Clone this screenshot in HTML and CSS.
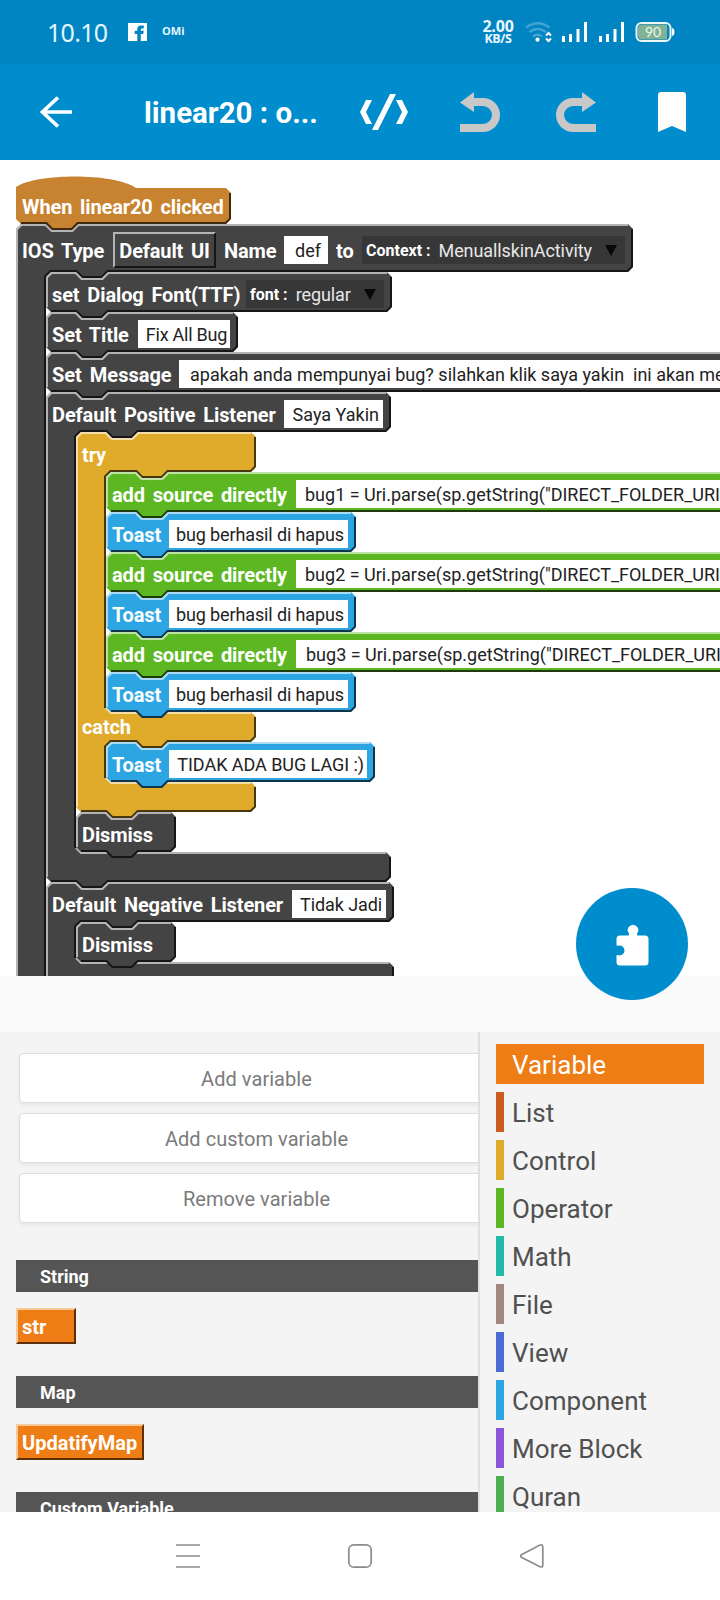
FILE: index.html
```html
<!DOCTYPE html>
<html lang="en">
<head>
<meta charset="utf-8">
<meta name="viewport" content="width=720">
<title>linear20 : onClick</title>
<link rel="stylesheet" href="styles.css">
</head>
<body>
<div class="phone">
  <header class="status">
    <span class="clock">10.10</span>
    <svg class="fb" width="19" height="18" viewBox="0 0 19 18"><path fill="#fff" d="M0 0H19V18H0z"/><path fill="#0084c2" d="M9.300 18V11H6.700V7.800H9.300V6.200Q9.300 2.500 13 2.500H15.800V5.500H14Q12.800 5.500 12.800 6.700V7.800H15.700L15.300 11H12.800V18z"/></svg>
    <span class="omi">OMi</span>
    <span class="speed"><b>2.00</b><i>KB/S</i></span>
    <svg class="net" width="156" height="24" viewBox="520 20 156 24" fill="none">
      <g stroke="#3fa5d6" stroke-width="2.600"><path d="M526 27.500q12-8.500 23.500 0M529.500 32q8-6 16.500 0M533 36.500q4.500-3.500 9 0"/></g>
      <circle cx="537.500" cy="39.700" r="2.100" fill="#fff"/>
      <path d="M546 35.500l2.500-2.500 2.500 2.500M546 38.500l2.500 2.500 2.500-2.500" stroke="#fff" stroke-width="2"/>
      <path fill="#fff" d="M562 36h3v6h-3zM569 34h3v8h-3zM576.500 29h3v13h-3zM584 22h3v20h-3zM599 36h3v6h-3zM606 34h3v8h-3zM613.500 29h3v13h-3zM621 22h3v20h-3z"/>
      <rect x="636.500" y="23" width="34" height="18" rx="5" stroke="#eaf6fa" stroke-width="2"/>
      <path d="M642 24.500H667V39.500H642q-4 0-4-4v-7q0-4 4-4z" fill="#83b196"/>
      <path d="M672.500 28.500q1.500 0 1.500 3.500t-1.500 3.500z" fill="#fff" stroke="#fff"/>
      <text x="645" y="37.200" class="batt">90</text>
    </svg>
  </header>
  <nav class="toolbar">
    <svg width="720" height="96" viewBox="0 64 720 96" class="tools">
      <path d="M58 97.500L42.500 112L58 126.500M42.500 112H72" fill="none" stroke="#fff" stroke-width="3.700"/>
      <path d="M366 100h6l-6 12 6 12h-6l-6-12zM396 100h6l6 12-6 12h-6l6-12zM390 94h6l-18 36h-6z" fill="#fff"/>
      <path d="M460 102.500L474 92V98H483a17 17 0 0 1 0 34H460V124H483a9 9 0 0 0 0-18H474V112z" fill="#c8c8c8"/>
      <path d="M596 102.500L582 92V98H573a17 17 0 0 0 0 34H596V124H573a9 9 0 0 1 0-18H582V112z" fill="#c8c8c8"/>
      <path d="M658 132V95q0-3 3-3h22q3 0 3 3v37l-14-6z" fill="#fff"/>
    </svg>
    <h1 class="title">linear20 : o...</h1>
  </nav>

  <main class="canvas">
    <svg class="shapes" width="720" height="816" viewBox="0 160 720 816" fill="none">
      <defs>
        <g id="toast">
          <path fill="#2ca5e2" d="M0 5L5 0H30l6 6h20l6-6H245l5 5V35l-5 5H62l-6 6H36l-6-6H5l-5-5z"/>
          <path class="lit" d="M1 35V5.500L5.500 1H29.600l6 6h20.800l6-6H245"/>
          <path class="shade" d="M249 5V34.600L244.600 39H61.600l-6 6H36.400l-6-6H5"/>
        </g>
        <g id="source">
          <path fill="#5cb722" d="M0 5L5 0H30l6 6h20l6-6H700V40H62l-6 6H36l-6-6H5l-5-5z"/>
          <path class="lit" d="M1 35V5.500L5.500 1H29.600l6 6h20.800l6-6H700"/>
          <path class="shade" d="M700 39H61.600l-6 6H36.400l-6-6H5"/>
        </g>
        <g id="dismiss">
          <path fill="#444" d="M0 5L5 0H30l6 6h20l6-6H95l5 5V35l-5 5H62l-6 6H36l-6-6H5l-5-5z"/>
          <path class="lit" d="M1 35V5.500L5.500 1H29.600l6 6h20.800l6-6H95"/>
          <path class="shade" d="M99 5V34.600L94.600 39H61.600l-6 6H36.400l-6-6H5"/>
        </g>
      </defs>
      <!-- outer statement wrapping every listener -->
      <g transform="translate(16 224)">
        <path fill="#444" d="M0 5L5 0H30l6 6h20l6-6H612l5 5V43l-5 5H92l-6 6H66l-6-6H35l-5 5V760H0z"/>
        <path class="lit" d="M1 760V5.500L5.500 1H29.600l6 6h20.800l6-6H612"/>
        <path class="shade" d="M616 5V42.600L611.600 47H91.600l-6 6H66.400l-6-6H34.500L29 52.500V760"/>
      </g>
      <!-- event hat -->
      <g transform="translate(16 188)">
        <path fill="#c88330" d="M0-1C22-15 98-15 120 0H210l5 5V31l-5 5H62l-6 6H36l-6-6H5l-5-5z"/>
        <path class="shade" d="M214 5V30.600L209.600 35H61.600l-6 6H36.400l-6-6H5"/>
      </g>
      <!-- dialog font -->
      <g transform="translate(46 272)">
        <path fill="#444" d="M0 5L5 0H30l6 6h20l6-6H341l5 5V35l-5 5H62l-6 6H36l-6-6H5l-5-5z"/>
        <path class="lit" d="M1 35V5.500L5.500 1H29.600l6 6h20.800l6-6H341"/>
        <path class="shade" d="M345 5V34.600L340.600 39H61.600l-6 6H36.400l-6-6H5"/>
      </g>
      <!-- title -->
      <g transform="translate(46 312)">
        <path fill="#444" d="M0 5L5 0H30l6 6h20l6-6H187l5 5V35l-5 5H62l-6 6H36l-6-6H5l-5-5z"/>
        <path class="lit" d="M1 35V5.500L5.500 1H29.600l6 6h20.800l6-6H187"/>
        <path class="shade" d="M191 5V34.600L186.600 39H61.600l-6 6H36.400l-6-6H5"/>
      </g>
      <!-- message -->
      <g transform="translate(46 352)">
        <path fill="#444" d="M0 5L5 0H30l6 6h20l6-6H700V40H62l-6 6H36l-6-6H5l-5-5z"/>
        <path class="lit" d="M1 35V5.500L5.500 1H29.600l6 6h20.800l6-6H700"/>
        <path class="shade" d="M700 39H61.600l-6 6H36.400l-6-6H5"/>
      </g>
      <!-- positive listener -->
      <g transform="translate(46 392)">
        <path fill="#444" d="M0 5L5 0H30l6 6h20l6-6H340l5 5V35l-5 5H92l-6 6H66l-6-6H35l-5 5V455l5 5H340l5 5V485l-5 5H62l-6 6H36l-6-6H5l-5-5z"/>
        <path class="lit" d="M1 485V5.500L5.500 1H29.600l6 6h20.800l6-6H340M30 456l5 5H340"/>
        <path class="shade" d="M344 5V34.600L339.600 39H91.600l-6 6H66.400l-6-6H34.500L29 44.500V456M344 465V484.600L339.600 489H61.600l-6 6H36.400l-6-6H5"/>
      </g>
      <!-- try / catch -->
      <g transform="translate(76 432)">
        <path fill="#e0aa2a" d="M0 5L5 0H30l6 6h20l6-6H175l5 5V35l-5 5H92l-6 6H66l-6-6H35l-5 5V275l5 5H175l5 5V305l-5 5H92l-6 6H66l-6-6H35l-5 5V345l5 5H175l5 5V375l-5 5H62l-6 6H36l-6-6H5l-5-5z"/>
        <path class="lit" d="M1 375V5.500L5.500 1H29.600l6 6h20.800l6-6H175M30 276l5 5H175M30 346l5 5H175"/>
        <path class="shade" d="M179 5V34.600L174.600 39H91.600l-6 6H66.400l-6-6H34.500L29 44.500V276M179 285V304.600L174.600 309H91.600l-6 6H66.400l-6-6H34.500L29 314.500V346M179 355V374.600L174.600 379H61.600l-6 6H36.400l-6-6H5"/>
      </g>
      <!-- negative listener -->
      <g transform="translate(46 882)">
        <path fill="#444" d="M0 5L5 0H30l6 6h20l6-6H343l5 5V35l-5 5H92l-6 6H66l-6-6H35l-5 5V75l5 5H343l5 5V120H0z"/>
        <path class="lit" d="M1 120V5.500L5.500 1H29.600l6 6h20.800l6-6H343M30 76l5 5H343"/>
        <path class="shade" d="M347 5V34.600L342.600 39H91.600l-6 6H66.400l-6-6H34.500L29 44.500V76M347 85V120"/>
      </g>
      <use href="#source" x="106" y="472"/><use href="#toast" x="106" y="512"/>
      <use href="#source" x="106" y="552"/><use href="#toast" x="106" y="592"/>
      <use href="#source" x="106" y="632"/><use href="#toast" x="106" y="672"/>
      <g transform="translate(106 742)">
        <path fill="#2ca5e2" d="M0 5L5 0H30l6 6h20l6-6H264l5 5V35l-5 5H62l-6 6H36l-6-6H5l-5-5z"/>
        <path class="lit" d="M1 35V5.500L5.500 1H29.600l6 6h20.800l6-6H264"/>
        <path class="shade" d="M268 5V34.600L263.600 39H61.600l-6 6H36.400l-6-6H5"/>
      </g>
      <use href="#dismiss" x="76" y="812"/><use href="#dismiss" x="76" y="922"/>
    </svg>

    <div class="stack">
      <div class="row hat"><span class="label">When linear20 clicked</span></div>
      <div class="row tall">
        <span class="label l-type">IOS Type</span><span class="choice">Default UI</span><span class="label l-name">Name</span><span class="field f-def">def</span><span class="label l-to">to</span><span class="drop d-context"><b>Context :</b><span>MenuallskinActivity</span><i class="arrow"></i></span>
      </div>
      <div class="nest">
        <div class="row"><span class="label l-font">set Dialog Font(TTF)</span><span class="drop d-font"><b>font :</b><span>regular</span><i class="arrow"></i></span></div>
        <div class="row"><span class="label l-title">Set Title</span><span class="field f-title">Fix All Bug</span></div>
        <div class="row"><span class="label l-message">Set Message</span><span class="field long f-message">apakah anda mempunyai bug? silahkan klik saya yakin&nbsp; ini akan menghapus</span></div>
        <div class="row"><span class="label l-positive">Default Positive Listener</span><span class="field f-yes">Saya Yakin</span></div>
        <div class="nest">
          <div class="row"><span class="label">try</span></div>
          <div class="nest">
            <div class="row"><span class="label l-source">add source directly</span><span class="field long">bug1 = Uri.parse(sp.getString("DIRECT_FOLDER_URI",</span></div>
            <div class="row"><span class="label l-toast">Toast</span><span class="field f-bug">bug berhasil di hapus</span></div>
            <div class="row"><span class="label l-source">add source directly</span><span class="field long">bug2 = Uri.parse(sp.getString("DIRECT_FOLDER_URI",</span></div>
            <div class="row"><span class="label l-toast">Toast</span><span class="field f-bug">bug berhasil di hapus</span></div>
            <div class="row"><span class="label l-source">add source directly</span><span class="field long third">bug3 = Uri.parse(sp.getString("DIRECT_FOLDER_URI",</span></div>
            <div class="row"><span class="label l-toast">Toast</span><span class="field f-bug">bug berhasil di hapus</span></div>
          </div>
          <div class="row catch"><span class="label">catch</span></div>
          <div class="nest">
            <div class="row"><span class="label l-toast">Toast</span><span class="field f-none">TIDAK ADA BUG LAGI :)</span></div>
          </div>
          <div class="foot"></div>
          <div class="row"><span class="label">Dismiss</span></div>
        </div>
        <div class="foot"></div>
        <div class="row"><span class="label l-negative">Default Negative Listener</span><span class="field f-no">Tidak Jadi</span></div>
        <div class="nest">
          <div class="row"><span class="label">Dismiss</span></div>
        </div>
      </div>
    </div>
  </main>

  <div class="gap">
    <button class="fab" aria-label="Blocks">
      <svg width="40" height="44" viewBox="0 0 40 44"><path fill="#fff" d="M7 12.500H14.500q1-.5 .3-2.200a5.200 5.200 0 1 1 8.400 0q-.7 1.700 .3 2.200H31q3.500 0 3.500 3.500V39q0 3.500-3.500 3.500H6q-3.500 0-3.500-3.500V32.500Q3 31.500 5.500 32.500a5 5 0 1 0 0-10Q3 23 2.500 22V16q0-3.500 3.500-3.500z"/></svg>
    </button>
  </div>

  <section class="palette">
    <div class="blocks">
      <div class="pill">Add variable</div>
      <div class="pill">Add custom variable</div>
      <div class="pill">Remove variable</div>
      <h2 class="group first">String</h2>
      <span class="var str">str</span>
      <h2 class="group">Map</h2>
      <span class="var map">UpdatifyMap</span>
      <h2 class="group">Custom Variable</h2>
    </div>
    <ul class="cats">
      <li class="cat on">Variable</li>
      <li class="cat list">List</li>
      <li class="cat control">Control</li>
      <li class="cat operator">Operator</li>
      <li class="cat math">Math</li>
      <li class="cat file">File</li>
      <li class="cat view">View</li>
      <li class="cat component">Component</li>
      <li class="cat more">More Block</li>
      <li class="cat quran">Quran</li>
    </ul>
  </section>

  <footer class="keys">
    <svg width="720" height="88" viewBox="0 1512 720 88" fill="none" stroke="#8c8c8c" stroke-width="1.700">
      <path d="M176 1545H200M176 1556H200M176 1567H200"/>
      <rect x="348.800" y="1544.800" width="22.400" height="22.400" rx="5"/>
      <path d="M521.800 1554.500L539.500 1545.300Q542.800 1544 542.800 1547V1565Q542.800 1568 539.500 1566.500L521.800 1557.500Q519.500 1556 521.800 1554.500z"/>
    </svg>
  </footer>
</div>
</body>
</html>
```
FILE: styles.css
```css
* { box-sizing: border-box; }
body { margin: 0; font-family: Roboto, "Liberation Sans", sans-serif; background: #fff; }
.phone { width: 720px; height: 1600px; overflow: hidden; display: flex; flex-direction: column; }

.status { height: 64px; flex: none; background: #0084c2; color: #fff; display: flex; align-items: center; padding-left: 47px; }
.clock { font: 400 25px/30px "Noto Sans", sans-serif; letter-spacing: -.7px; width: 81px; padding-bottom: 1px; color: #e0f5ff; }
.fb { flex: none; }
.omi { font: 700 11px/14px "Open Sans", sans-serif; margin-left: 15px; width: 24px; padding-bottom: 2px; color: #e6f8ff; }
.speed { margin-left: 290px; width: 44px; display: flex; flex-direction: column; align-items: center; font-family: "Open Sans", sans-serif; color: #eaf8ff; }
.speed b { font-size: 16px; line-height: 14px; font-weight: 700; letter-spacing: -.2px; }
.speed i { font-size: 12.500px; line-height: 12px; font-weight: 700; font-style: normal; letter-spacing: -.4px; }
.net { flex: none; }
.batt { font: 400 14px Lato, sans-serif; fill: #e8fbf0; }

.toolbar { height: 96px; flex: none; background: #008dcd; position: relative; }
.tools { position: absolute; left: 0; top: 0; }
.title { margin: 0; padding: 31px 0 0 144px; font-size: 29.500px; line-height: 36px; font-weight: 700; color: #fff; }

.canvas { height: 816px; flex: none; position: relative; overflow: hidden; background: #fff; }
.shapes { position: absolute; left: 0; top: 0; }
.lit { stroke: rgba(255, 255, 255, .6); stroke-width: 2; }
.shade { stroke: rgba(0, 0, 0, .68); stroke-width: 2; }
.stack { position: relative; padding: 28px 0 0 16px; }
.nest { padding-left: 30px; }
.row { height: 40px; padding: 4px 0 0 6px; display: flex; align-items: center; white-space: nowrap; }
.hat { height: 36px; padding-top: 2px; }
.tall { height: 48px; }
.catch { height: 30px; padding-top: 0; }
.foot { height: 30px; }
.label { flex: none; color: #fff; font-size: 20px; line-height: 24px; font-weight: 700; word-spacing: 3px; letter-spacing: -.12px; padding-top: 1px; }
.hat .label, .catch .label { padding-top: 0; }
.l-type { width: 91px; }
.l-name { width: 60px; }
.l-to { width: 26px; }
.l-font { width: 194px; }
.l-title { width: 86px; }
.l-message { width: 127px; letter-spacing: 0; }
.l-positive { width: 232px; }
.l-source { width: 184px; }
.l-toast { width: 57px; }
.l-negative { width: 240px; }
.choice { width: 103px; height: 36px; border: 2px solid; border-color: #b4b4b4 #161616 #161616 #b4b4b4; color: #fff; font-size: 20px; line-height: 34px; font-weight: 700; word-spacing: 3px; letter-spacing: -.15px; text-align: center; margin-right: 8px; flex: none; }
.field { height: 28px; flex: none; background: #fff; color: #222; font-size: 18px; line-height: 29px; text-align: right; padding-right: 4px; }
.long { text-align: left; width: 700px; padding-left: 9px; }
.third { padding-left: 10px; }
.f-message { padding-left: 11px; }
.f-def { width: 44px; padding-right: 7px; margin-right: 8px; }
.f-title { width: 92px; letter-spacing: -.25px; padding-right: 3px; }
.f-yes { width: 99px; }
.f-bug { width: 179px; letter-spacing: -.12px; }
.f-none { width: 198px; padding-right: 3px; letter-spacing: -.05px; }
.f-no { width: 94px; letter-spacing: -.1px; }
.drop { height: 28px; flex: none; background: #373737; color: #e8e8e8; display: flex; align-items: center; font-size: 18px; line-height: 29px; padding: 0 8px 0 4px; }
.drop span { letter-spacing: -.1px; }
.drop b { color: #fff; font-size: 16px; margin-right: 8px; }
.drop .arrow { margin-left: auto; border: 6px solid transparent; border-top: 11px solid #080808; border-bottom: 0; }
.d-context { width: 263px; }
.d-font { width: 138px; }

.gap { height: 56px; flex: none; background: #fafafa; position: relative; }
.fab { position: absolute; left: 576px; top: -88px; width: 112px; height: 112px; border: 0; border-radius: 50%; background: #008dcd; padding: 1px 0 0 3px; display: flex; align-items: center; justify-content: center; }

.palette { height: 480px; flex: none; display: flex; overflow: hidden; background: #f4f4f4; }
.blocks { width: 480px; flex: none; border-right: 2px solid #e0e0e0; padding: 21px 0 0 16px; overflow: hidden; }
.pill { height: 50px; width: 475px; margin: 0 0 10px 3px; border: 1px solid #dedede; border-radius: 5px; background: #fff; box-shadow: 0 2px 4px rgba(0, 0, 0, .06); color: #7b7b7b; font-size: 20px; line-height: 51px; text-align: center; letter-spacing: .05px; }
.group { margin: 0; height: 32px; background: #555; color: #fff; font-size: 18px; line-height: 33px; font-weight: 700; padding-left: 24px; }
.group.first { margin-top: 37px; }
.var { display: block; height: 36px; margin: 16px 0 32px; border: 2px solid; border-color: #f8c999 #5d2f06 #5d2f06 #f8c999; background: #ee7d16; color: #fff; font-size: 20px; line-height: 34px; font-weight: 700; padding-left: 4px; }
.str { width: 60px; }
.map { width: 128px; }
.cats { list-style: none; margin: 0; padding: 12px 16px; flex: 1; display: flex; flex-direction: column; gap: 8px; }
.cat { height: 40px; flex: none; border-left: 8px solid; padding-left: 8px; color: #505050; font-size: 26px; line-height: 42px; }
.cat.on { background: #ee7d16; color: #fff; border-color: #ee7d16; }
.list { border-color: #cc5b22; }
.control { border-color: #e0aa2a; }
.operator { border-color: #5cb722; }
.math { border-color: #23b9a9; }
.file { border-color: #a1887f; }
.view { border-color: #4a6cd4; }
.component { border-color: #2ca5e2; }
.more { border-color: #8a55d7; }
.quran { border-color: #4caf50; }

.keys { height: 88px; flex: none; background: #fff; }
```
